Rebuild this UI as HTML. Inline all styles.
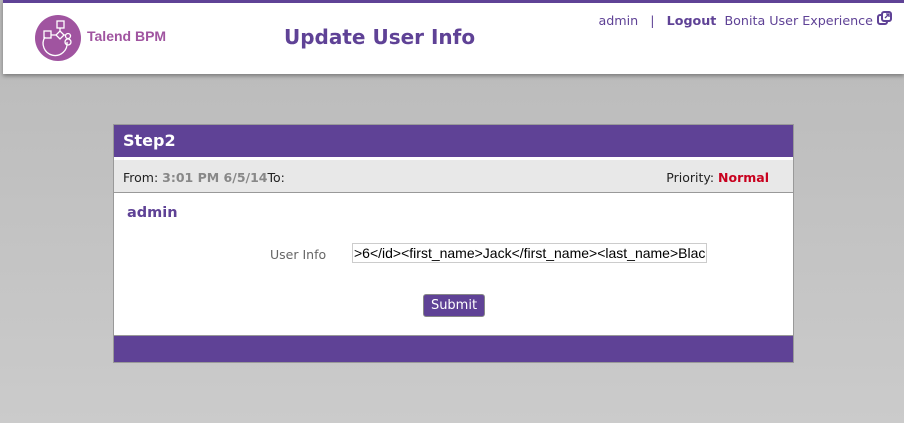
<!DOCTYPE html>
<html><head><meta charset="utf-8"><style>
*{margin:0;padding:0;box-sizing:border-box}
body{width:904px;height:423px;overflow:hidden;background:linear-gradient(#b9b9b9,#cbcbcb);font-family:"DejaVu Sans","Liberation Sans",sans-serif;position:relative}
.hdr{position:absolute;left:3px;top:0;width:901px;height:74px;background:#fff;border-top:3px solid #5f4296;box-shadow:0 2px 4px rgba(0,0,0,.35)}
.logo{position:absolute;left:32px;top:12px}
.brand{position:absolute;left:84px;top:25px;font:bold 14px "Liberation Sans",sans-serif;color:#a054a0}
.title{position:absolute;left:281px;top:22px;font-weight:bold;font-size:20px;color:#5f4296}
.nav{position:absolute;right:12px;top:8px;font-size:12.7px;color:#5f4296;white-space:nowrap}
.panel{position:absolute;left:113px;top:124px;width:681px;height:239px;background:#fff;border:1px solid #999}
.bar{background:#5f4296;height:32px;color:#fff;font-weight:bold;font-size:16px;padding:6px 9px}
.info{position:absolute;top:35px;left:0;right:0;height:33px;background:#e8e8e8;border-bottom:1px solid #999;font-size:12.5px;color:#222;padding:10px 9px}
.info b{color:#888}
.pri{position:absolute;right:24px;top:10px}
.pri b{color:#c8001e}
.admin{position:absolute;left:13px;top:80px;font-weight:bold;font-size:14.5px;color:#5f4296}
.lbl{position:absolute;left:156px;top:122px;font-size:12.5px;color:#666}
.inp{position:absolute;left:238px;top:118px;width:355px;height:20px;border:1px solid #ccc;font:14px "Liberation Sans",sans-serif;padding:0 1px;line-height:18px;color:#000;white-space:nowrap;overflow:hidden}
.btn{position:absolute;left:309px;top:169px;width:62px;height:23px;background:#5f4296;border:1px solid #888;border-radius:3px;color:#fff;font-size:13px;text-align:center;line-height:21px}
.foot{position:absolute;left:0;right:0;bottom:0;height:27px;background:#5f4296;border-top:1px solid #999}
</style></head><body>
<div class="hdr">
<svg class="logo" width="46" height="46" viewBox="0 0 46 46"><circle cx="23" cy="23" r="23" fill="#a054a0"/>
<g fill="none" stroke="#fff" stroke-width="1.3"><rect x="22" y="6" width="7" height="7"/><rect x="9" y="16" width="7" height="7"/><path d="M25 16l4 4-4 4-4-4z"/><circle cx="33" cy="21" r="2.5"/><circle cx="33" cy="27" r="3"/><path d="M16 20h5M25 13v3M29 20h2"/><path d="M10 22a12 12 0 1 0 22 5"/></g></svg>
<div class="brand">Talend BPM</div>
<div class="title">Update User Info</div>
<div class="nav">admin &nbsp;&nbsp;|&nbsp;&nbsp; <b>Logout</b>&nbsp; Bonita User Experience <svg width="15" height="15" viewBox="0 0 15 15" style="vertical-align:-1px"><rect x="1" y="4" width="9" height="9" rx="2" fill="none" stroke="#5f4296" stroke-width="2"/><rect x="5" y="1" width="9" height="9" rx="2" fill="#fff" stroke="#5f4296" stroke-width="2"/><path d="M8 7l4-4M9 3h3v3" stroke="#5f4296" stroke-width="1.3" fill="none"/></svg></div>
</div>
<div class="panel">
<div class="bar">Step2</div>
<div class="info">From: <b>3:01 PM 6/5/14</b>To:<span class="pri">Priority: <b>Normal</b></span></div>
<div class="admin">admin</div>
<div class="lbl">User Info</div>
<div class="inp">&gt;6&lt;/id&gt;&lt;first_name&gt;Jack&lt;/first_name&gt;&lt;last_name&gt;Blac|</div>
<div class="btn">Submit</div>
<div class="foot"></div>
</div>
</body></html>
